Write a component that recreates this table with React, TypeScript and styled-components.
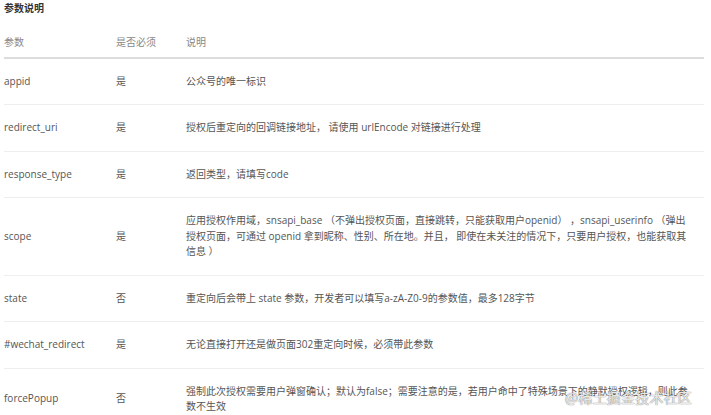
import React from 'react';
import styled, { createGlobalStyle } from 'styled-components';

const GlobalStyle = createGlobalStyle`
  html, body {
    margin: 0;
    padding: 0;
    background: #fff;
  }
  body {
    font-family: 'Open Sans', 'Noto Sans CJK SC', sans-serif;
    font-size: 10px;
    color: #555;
    overflow: hidden;
  }
`;

const Page = styled.div`
  position: relative;
  width: 711px;
  height: 415px;
  padding: 0 7px 0 4px;
  box-sizing: border-box;
  overflow: hidden;
`;

const Title = styled.h4`
  margin: 0;
  font-size: 10px;
  line-height: 16px;
  font-weight: 700;
  color: #333;
`;

const Table = styled.div`
  display: grid;
  grid-template-columns: 112px 70px 1fr;
`;

const Cell = styled.div<{ $head?: boolean }>`
  display: flex;
  align-items: center;
  line-height: 15.5px;
  padding: ${(p) => (p.$head ? '19px 0 6px' : '15px 0')};
  border-bottom: ${(p) => (p.$head ? '2px solid #dcdcdc' : '1px solid #eeeeee')};
  color: ${(p) => (p.$head ? '#888' : '#555')};
  white-space: nowrap;
`;

const Watermark = styled.div`
  position: absolute;
  left: 565px;
  top: 388px;
  font-family: 'Noto Sans CJK SC', sans-serif;
  font-size: 14px;
  line-height: 18px;
  color: rgba(255, 255, 255, 0.85);
  text-shadow: 0 0 1px rgba(90, 90, 90, 0.7), 0 0 1px rgba(90, 90, 90, 0.7);
  letter-spacing: 0.2px;
`;

type Row = { name: string; required: string; desc: React.ReactNode };

const rows: Row[] = [
  { name: 'appid', required: '是', desc: '公众号的唯一标识' },
  { name: 'redirect_uri', required: '是', desc: '授权后重定向的回调链接地址， 请使用 urlEncode 对链接进行处理' },
  { name: 'response_type', required: '是', desc: '返回类型，请填写code' },
  {
    name: 'scope',
    required: '是',
    desc: (
      <>
        应用授权作用域，snsapi_base （不弹出授权页面，直接跳转，只能获取用户openid） ，snsapi_userinfo （弹出
        <br />
        授权页面，可通过 openid 拿到昵称、性别、所在地。并且， 即使在未关注的情况下，只要用户授权，也能获取其
        <br />
        信息 ）
      </>
    ),
  },
  { name: 'state', required: '否', desc: '重定向后会带上 state 参数，开发者可以填写a-zA-Z0-9的参数值，最多128字节' },
  { name: '#wechat_redirect', required: '是', desc: '无论直接打开还是做页面302重定向时候，必须带此参数' },
  {
    name: 'forcePopup',
    required: '否',
    desc: (
      <>
        强制此次授权需要用户弹窗确认；默认为false；需要注意的是，若用户命中了特殊场景下的静默授权逻辑，则此参
        <br />
        数不生效
      </>
    ),
  },
];

export default function App() {
  return (
    <Page>
      <GlobalStyle />
      <Title>参数说明</Title>
      <Table>
        <Cell $head>参数</Cell>
        <Cell $head>是否必须</Cell>
        <Cell $head>说明</Cell>
        {rows.map((r) => (
          <React.Fragment key={r.name}>
            <Cell>{r.name}</Cell>
            <Cell>{r.required}</Cell>
            <Cell>
              <div>{r.desc}</div>
            </Cell>
          </React.Fragment>
        ))}
      </Table>
      <Watermark>@稀土掘金技术社区</Watermark>
    </Page>
  );
}
